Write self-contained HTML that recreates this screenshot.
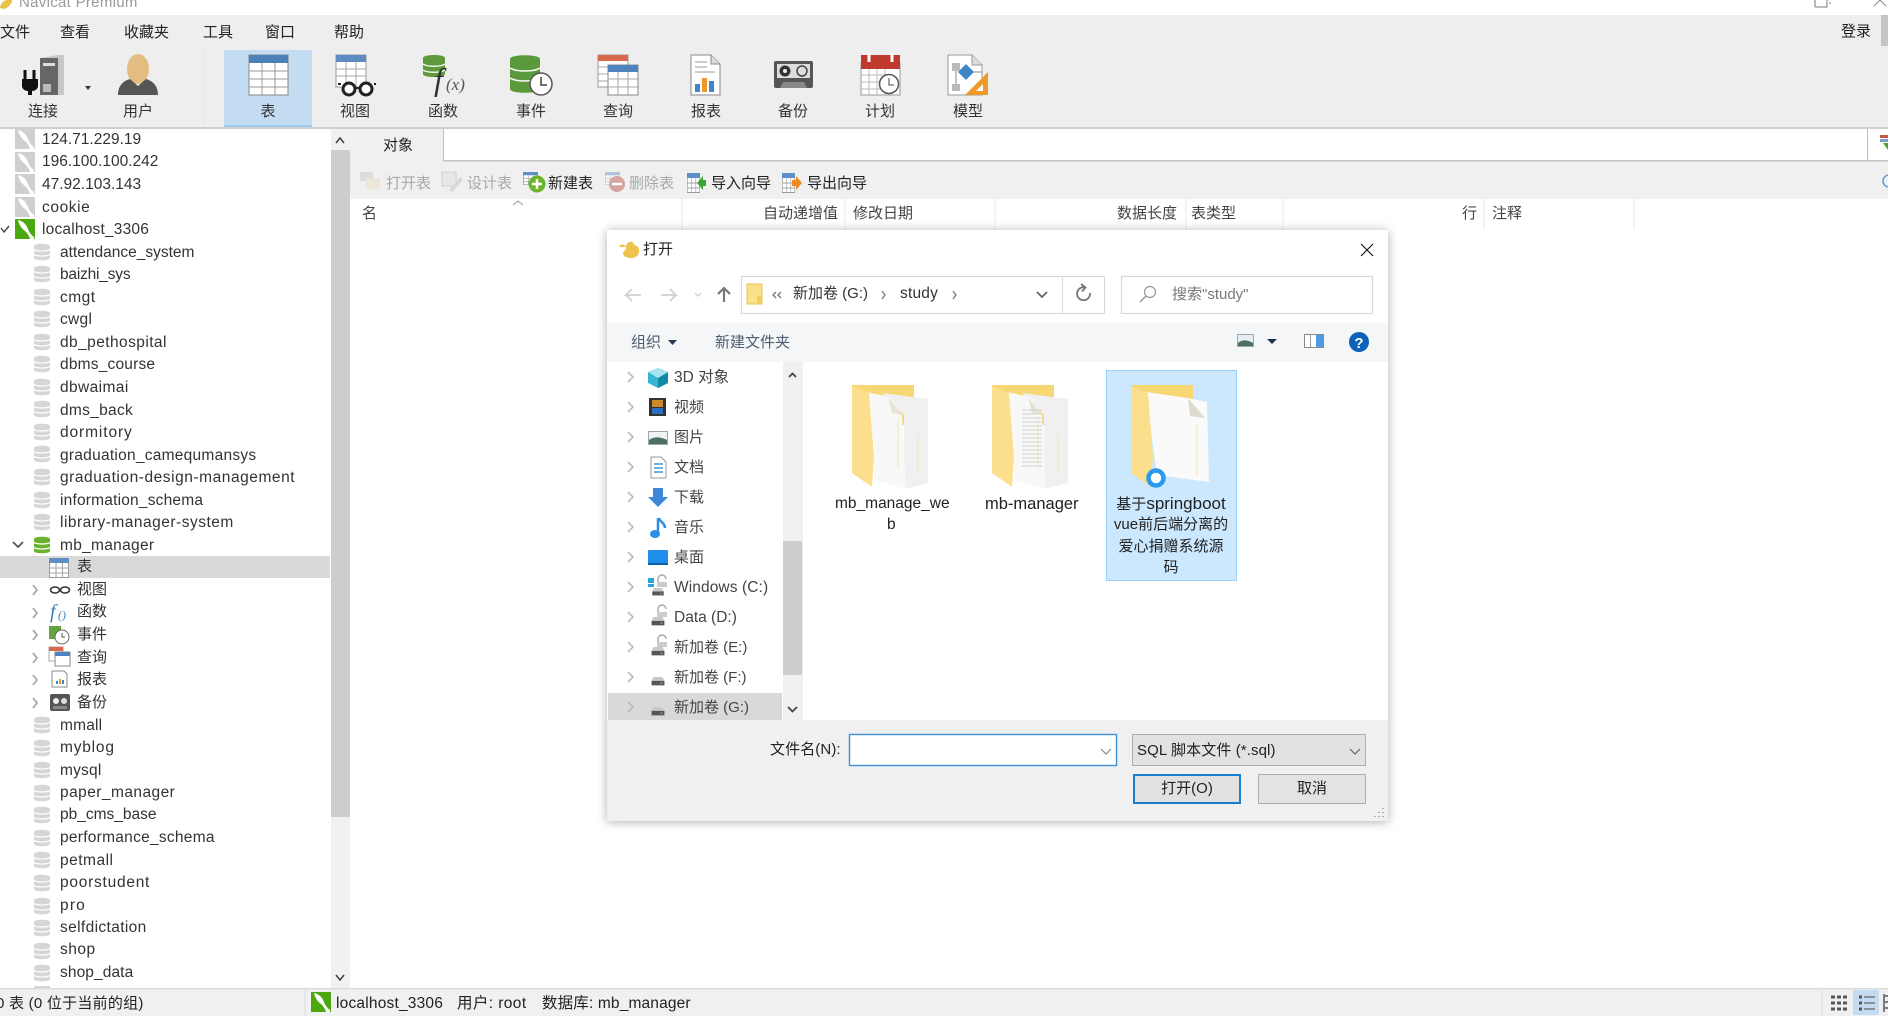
<!DOCTYPE html>
<html lang="zh"><head><meta charset="utf-8"><title>Navicat Premium</title>
<style>
html,body{margin:0;padding:0;width:1888px;height:1016px;overflow:hidden;background:#fff}
#r{position:relative;width:1888px;height:1016px;overflow:hidden;font-family:"Liberation Sans","Noto Sans CJK SC",sans-serif;color:#333;filter:blur(.3px)}
svg.bg{position:absolute;left:0;top:0}
.t{position:absolute;white-space:nowrap;line-height:20px;font-size:15.5px}
.c{font-size:15px}
.k{color:#222}
.m{font-size:15px;color:#222;top:23px}
.l{font-size:15px;color:#333;top:102px;width:60px;text-align:center}
.g{font-size:15px;color:#a9a9a9;top:174px}
.h{font-size:15px;color:#444;top:204px}
.n{font-size:15px;color:#444}
#clip{position:absolute;left:0;top:128px;width:330px;height:860px;overflow:hidden}
#clip .t{margin-top:-128px}
.ct{text-align:center;width:130px;left:1106px;font-size:15px;color:#222}
</style></head><body><div id="r">
<svg class="bg" width="1888" height="1016" viewBox="0 0 1888 1016">
<defs>
<symbol id="db" viewBox="0 0 16 18" width="16" height="18"><path fill="currentColor" d="M0 3C0 0 16 0 16 3v12c0 3-16 3-16 0z"/><path d="M0 6.5c3 2 13 2 16 0M0 11.5c3 2 13 2 16 0" stroke="#fff" fill="none" stroke-width="1.3"/></symbol>
<symbol id="srv" viewBox="0 0 20 20" width="20" height="20"><rect width="20" height="20" fill="currentColor"/><path fill="#fff" d="M3 1c5 1 8 4 10 9 1 3 3 6 6 8v2h-4c-1-4-3-6-5-8C7 10 4 6 3 1z"/></symbol>
<symbol id="fold" viewBox="0 0 78 104" width="78" height="104">
<path fill="#f7d674" d="M0 0h62v40H0z"/>
<path fill="#f0f0f0" d="M30 8l46 6v84l-24 6V30z"/>
<path stroke="#f3e6b8" d="M66 50v36" fill="none"/>
<path fill="#f8f8f8" d="M15 7l23 5 12 18 4 74-32-9V60z"/>
<path stroke="#f3e6b8" d="M46 34v50" fill="none"/>
<path fill="#e6e3d6" d="M36 12l14 18-10-2z"/>
<path fill="#fbdf8c" d="M0 1l17 7 5 64-2 30L0 88z"/>
</symbol>
<symbol id="drv" viewBox="0 0 20 14" width="20" height="14"><path fill="#c9c9c9" d="M3 0h14l3 6H0z"/><rect y="6" width="20" height="7" fill="#555"/><rect x="14" y="8.5" width="3" height="2" fill="#5dd05d"/></symbol>
<symbol id="tbl" viewBox="0 0 20 20" width="20" height="20" preserveAspectRatio="none"><rect x=".5" y=".5" width="19" height="19" fill="#fff" stroke="#9a9a9a"/><rect width="20" height="5" fill="#5f8fc4"/><path d="M0 10h20M0 15h20M7 5v15M13.500 5v15" stroke="#a5a5a5"/></symbol>
<filter id="sh" x="-5%" y="-5%" width="110%" height="110%"><feDropShadow dx="0" dy="1" stdDeviation="5" flood-color="#000" flood-opacity=".32"/></filter>
</defs>

<!-- frame -->
<rect x="0" y="15" width="1888" height="112" fill="#eeeeee"/>
<rect x="0" y="127" width="1888" height="2" fill="#cfcfcf"/>
<rect x="1881" y="15" width="7" height="31" fill="#c6c6c6"/>
<rect x="204" y="52" width="1" height="72" fill="#e4e4e4"/>
<rect x="224" y="50" width="88" height="77" fill="#c3dcf1"/><rect x="224" y="125" width="88" height="2" fill="#98c9ee"/>
<path d="M1815 7V0M1815 7h12V0M1829 3h2" stroke="#777" fill="none"/>
<path d="M1874 6l6-6 6 6" stroke="#888" fill="none"/>
<path d="M0 8c0-3 3-8 7-8h5c0 4-4 8-8 9z" fill="#e8c44a"/>

<!-- tree scrollbar -->
<rect x="331" y="129" width="19" height="860" fill="#f1f1f1"/>
<rect x="331" y="150" width="19" height="667" fill="#cdcdcd"/>
<path d="M336 143l4-5 4 5M336 975l4 5 4-5" stroke="#444" stroke-width="1.600" fill="none"/>
<rect x="0" y="556" width="330" height="22" fill="#d9d9d9"/>

<!-- main -->
<rect x="350" y="129" width="1538" height="70" fill="#f0f0f0"/>
<rect x="443" y="129" width="1424" height="32" fill="#fff"/>
<path d="M443.500 129v32h1424V129" stroke="#bdbdbd" fill="none"/>
<rect x="443" y="160" width="1445" height="1.500" fill="#c2c2c2"/>
<rect x="1868" y="129" width="20" height="31" fill="#fff"/>
<rect x="1880" y="135" width="8" height="3" fill="#c9564a"/><rect x="1880" y="139" width="8" height="3" fill="#7a9cc6"/><path d="M1883 143h5v7z" fill="#4aa52e"/>
<circle cx="1889" cy="181" r="6" fill="none" stroke="#5b9bd5" stroke-width="1.500"/>
<path d="M682 199v31M845 199v31M995 199v31M1186 199v31M1283 199v31M1484 199v31M1634 199v31" stroke="#e9e9e9"/>
<path d="M513 205l5-4 5 4" stroke="#999" fill="none"/>

<!-- obj toolbar icons -->
<g opacity=".45"><rect x="360" y="172" width="13" height="9" fill="#c5c5c5"/><path d="M366 178h14v11h-14z" fill="#e9ddb8"/>
<rect x="442" y="172" width="14" height="14" fill="#ddd" stroke="#aaa"/><path d="M449 190l11-13 3 3-11 12z" fill="#bbb"/></g>
<use href="#tbl" x="523" y="172" width="15" height="13"/><circle cx="537" cy="184" r="8.500" fill="#6ab52d"/><path d="M532 184h10M537 179v10" stroke="#fff" stroke-width="2.500"/>
<use href="#tbl" x="605" y="172" width="15" height="13" opacity=".45"/><circle cx="617" cy="184" r="8" fill="#d6a3a3"/><path d="M612 184h10" stroke="#fff" stroke-width="2.500"/>
<use href="#tbl" x="687" y="173" width="13" height="20"/><path d="M697 183l6-7v4h3v6h-3v4z" fill="#3aa535"/>
<use href="#tbl" x="782" y="173" width="13" height="20"/><path d="M792 180h4v-4l6 7-6 7v-4h-4z" fill="#f08a1d"/>

<!-- top toolbar icons -->
<path d="M40 58l18-3h6v40H40z" fill="#c8c8c8"/><rect x="40" y="58" width="18" height="37" fill="#666"/><rect x="43" y="63" width="12" height="3" fill="#ddd"/><rect x="43" y="84" width="8" height="8" fill="#bbb"/>
<path d="M25 70v9M34 70v9" stroke="#111" stroke-width="3"/><path d="M22 79h16v7c0 3-3 5-6 5v4h-4v-4c-3 0-6-2-6-5z" fill="#111"/>
<path d="M85 86h6l-3 4z" fill="#333"/>
<ellipse cx="138" cy="69" rx="11" ry="15" fill="#e2bd7f"/><path d="M118 95c0-9 5-14 12-16l8 7 8-7c7 2 12 7 12 16z" fill="#555"/>

<rect x="249" y="55" width="39" height="40" fill="#fff" stroke="#888"/><rect x="249" y="55" width="39" height="8" fill="#4d7fb8"/>
<path d="M249 71h39M249 79h39M249 87h39M262 63v32M275 63v32" stroke="#999"/>

<rect x="336" y="55" width="30" height="32" fill="#fff" stroke="#999"/><rect x="336" y="55" width="30" height="7" fill="#5c8cc2"/>
<path d="M336 69h30M336 76h30M346 62v25M356 62v25" stroke="#aaa"/>
<circle cx="349" cy="89" r="6" fill="#fff" stroke="#222" stroke-width="3"/><circle cx="366" cy="89" r="6" fill="#fff" stroke="#222" stroke-width="3"/><path d="M355 88h5M341 84h-3M374 84h2" stroke="#222" stroke-width="2"/>

<path d="M423 58c0-4 22-4 22 0v16c0 4-22 4-22 0z" fill="#5f9a3c"/><path d="M423 64c4 3 18 3 22 0M423 70c4 3 18 3 22 0" stroke="#fff" fill="none" stroke-width="1.300"/>
<text x="434" y="90" font-family="Liberation Serif,serif" font-style="italic" font-size="32" fill="#333">f</text><text x="446" y="90" font-family="Liberation Serif,serif" font-style="italic" font-size="17" fill="#555">(x)</text>

<path d="M510 59c0-5 30-5 30 0v30c0 5-30 5-30 0z" fill="#5b9a3c"/><path d="M510 68c6 4 24 4 30 0M510 78c6 4 24 4 30 0" stroke="#fff" fill="none" stroke-width="1.500"/>
<circle cx="541" cy="84" r="11" fill="#fff" stroke="#555" stroke-width="1.500"/><path d="M541 77v8h6" stroke="#444" fill="none" stroke-width="1.500"/>

<rect x="598" y="55" width="30" height="32" fill="#fff" stroke="#999"/><rect x="598" y="55" width="30" height="6" fill="#d9694e"/><path d="M598 67h10M598 74h10M598 81h10" stroke="#aaa"/>
<rect x="608" y="65" width="30" height="30" fill="#fff" stroke="#888"/><rect x="608" y="65" width="30" height="7" fill="#4d84bd"/><path d="M608 79h30M608 87h30M618 72v23M628 72v23" stroke="#aaa"/>

<path d="M691 55h20l9 9v31h-29z" fill="#fff" stroke="#888"/><path d="M711 55v9h9" fill="#ddd" stroke="#888"/>
<path d="M695 62h12M695 67h12M695 72h20" stroke="#999"/><rect x="695" y="84" width="5" height="8" fill="#3f86c8"/><rect x="702" y="78" width="5" height="14" fill="#ee9a2a"/><rect x="709" y="81" width="5" height="11" fill="#3f86c8"/>

<rect x="774" y="61" width="39" height="27" rx="2" fill="#555"/><rect x="777" y="64" width="33" height="14" fill="#ddd"/><circle cx="785" cy="71" r="5.500" fill="#333"/><circle cx="785" cy="71" r="2" fill="#eee"/><circle cx="802" cy="71" r="5" fill="#ddd" stroke="#444" stroke-width="1.500"/><path d="M780 88l3-6h21l3 6z" fill="#888"/>

<rect x="861" y="63" width="39" height="32" fill="#fff" stroke="#999"/><rect x="861" y="55" width="39" height="14" fill="#c0392f"/><path d="M869 53v9M892 53v9" stroke="#fff" stroke-width="3"/>
<path d="M861 75h28M861 82h28M861 89h28M869 69v26M877 69v26M885 69v26" stroke="#bbb"/><circle cx="889" cy="84" r="9.500" fill="#fff" stroke="#555" stroke-width="1.500"/><path d="M889 78v7h5" stroke="#444" fill="none"/>

<path d="M948 55h24l10 10v30h-34z" fill="#fff" stroke="#999"/><path d="M972 55v10h10" fill="#ddd" stroke="#999"/>
<path d="M958 72l8-8 8 8-8 8z" fill="#3f86c8"/><rect x="952" y="63" width="8" height="8" fill="#bbb"/><rect x="952" y="84" width="8" height="7" fill="#bbb"/><path d="M956 71v13M974 72h8" stroke="#888"/>
<path d="M988 72v23h-23z" fill="#ee9a2a"/><path d="M983 84v7h-7z" fill="#fff"/>

<!-- tree icons -->
<g color="#cfcfcf"><use href="#srv" x="15" y="129"/><use href="#srv" x="15" y="152"/><use href="#srv" x="15" y="174"/><use href="#srv" x="15" y="197"/></g>
<use href="#srv" x="15" y="219" color="#4ba80f"/>
<path d="M1 228l3 4 5-6" stroke="#444" fill="none" stroke-width="1.400"/>
<g color="#d6d6d6">
<use href="#db" x="34" y="243"/><use href="#db" x="34" y="265"/><use href="#db" x="34" y="288"/><use href="#db" x="34" y="310"/><use href="#db" x="34" y="333"/><use href="#db" x="34" y="355"/><use href="#db" x="34" y="378"/><use href="#db" x="34" y="400"/><use href="#db" x="34" y="423"/><use href="#db" x="34" y="445"/><use href="#db" x="34" y="468"/><use href="#db" x="34" y="491"/><use href="#db" x="34" y="513"/>
<use href="#db" x="34" y="716"/><use href="#db" x="34" y="739"/><use href="#db" x="34" y="761"/><use href="#db" x="34" y="784"/><use href="#db" x="34" y="806"/><use href="#db" x="34" y="829"/><use href="#db" x="34" y="851"/><use href="#db" x="34" y="874"/><use href="#db" x="34" y="897"/><use href="#db" x="34" y="919"/><use href="#db" x="34" y="942"/><use href="#db" x="34" y="964"/><rect x="34" y="986" width="16" height="2" fill="#d6d6d6"/>
</g>
<use href="#db" x="34" y="536" color="#6ab22e"/>
<path d="M13 542l5 5 5-5" stroke="#555" fill="none" stroke-width="1.800"/>
<path d="M33 585l4 5-4 5M33 608l4 5-4 5M33 630l4 5-4 5M33 653l4 5-4 5M33 675l4 5-4 5M33 698l4 5-4 5" stroke="#a8a8a8" fill="none" stroke-width="1.800"/>
<use href="#tbl" x="49" y="558"/>
<ellipse cx="55" cy="590" rx="4.500" ry="3" fill="none" stroke="#333" stroke-width="1.500"/><ellipse cx="65" cy="590" rx="4.500" ry="3" fill="none" stroke="#333" stroke-width="1.500"/>
<text x="50" y="618" font-family="Liberation Serif,serif" font-style="italic" font-size="20" fill="#3f7fb5">f</text><text x="58" y="619" font-family="Liberation Serif,serif" font-style="italic" font-size="12" fill="#3f7fb5">()</text>
<rect x="49" y="626" width="12" height="13" fill="#62a33f"/><circle cx="62" cy="637" r="7" fill="#fff" stroke="#666"/><path d="M62 633v4h3" stroke="#555" fill="none"/>
<rect x="49" y="647" width="14" height="14" fill="#fff" stroke="#aaa"/><rect x="49" y="647" width="14" height="4" fill="#d9694e"/><rect x="55" y="652" width="15" height="14" fill="#fff" stroke="#888"/><rect x="55" y="652" width="15" height="4" fill="#4d84bd"/>
<path d="M52 671h12l3 3v13H52z" fill="#fff" stroke="#888"/><rect x="56" y="681" width="2" height="3" fill="#3f86c8"/><rect x="59" y="679" width="2" height="5" fill="#ee9a2a"/><rect x="62" y="680" width="2" height="4" fill="#3f86c8"/>
<rect x="50" y="694" width="20" height="17" rx="2" fill="#555"/><circle cx="56" cy="701" r="3" fill="#eee"/><circle cx="64" cy="701" r="3" fill="#ddd"/><rect x="53" y="706" width="14" height="3" fill="#888"/>

<!-- status bar -->
<rect x="0" y="989" width="1888" height="27" fill="#f0f0f0"/><rect x="0" y="988" width="1888" height="1.500" fill="#dcdcdc"/>
<path d="M305 990v26M1822 990v26" stroke="#ddd"/>
<use href="#srv" x="311" y="992" color="#4ba80f"/>
<path d="M1831 997h4M1837 997h4M1843 997h4M1831 1003h4M1837 1003h4M1843 1003h4M1831 1009h4M1837 1009h4M1843 1009h4" stroke="#555" stroke-width="3"/>
<rect x="1853" y="990" width="26" height="25" fill="#c3dcf1"/>
<path d="M1859 997h3M1859 1003h3M1859 1009h3" stroke="#555" stroke-width="3"/><path d="M1864 997h11M1864 1003h11M1864 1009h11" stroke="#777" stroke-width="1.500"/>
<path d="M1885 996h3M1885 1002h3M1885 1008h3M1884 994v18" stroke="#555" stroke-width="1.500"/>

<!-- dialog -->
<rect x="607" y="230" width="781" height="591" fill="#fff" filter="url(#sh)"/>
<rect x="607" y="720" width="781" height="101" fill="#f0f0f0"/>
<rect x="607" y="323" width="781" height="39" fill="#f5f6f7"/>
<path d="M619 247a3.500 3.500 0 1 1 5 4l-1 2c0 3 3 5 8 5 6 0 9-4 8-9-1-3-3-4-5-4 0-3-3-4-5-3-2 1-3 3-3 5z" fill="#eec24e"/>
<path d="M1361 244l12 12M1373 244l-12 12" stroke="#111" stroke-width="1.100"/>
<rect x="741.500" y="276.500" width="363" height="37" fill="#fff" stroke="#d9d9d9" stroke-width="1.200"/><path d="M1062.500 277v36" stroke="#d9d9d9"/>
<path d="M641 295h-15l6-6M626 295l6 6M661 295h15l-6-6M676 295l-6 6" stroke="#d0d0d0" fill="none" stroke-width="1.800"/>
<path d="M695 293l3 3 3-3" stroke="#d5d5d5" fill="none" stroke-width="1.500"/>
<path d="M724 302v-14M718 294l6-6 6 6" stroke="#777" fill="none" stroke-width="2.200"/>
<path d="M747 284h15v20h-15z" fill="#fbe08a" stroke="#e8c257"/><rect x="757" y="296" width="5" height="8" fill="#f3cd5f"/>
<path d="M776 292l-3 3 3 3M781 292l-3 3 3 3M882 291l3 4-3 4M953 291l3 4-3 4" stroke="#777" fill="none" stroke-width="1.300"/>
<path d="M1037 292l5 5 5-5" stroke="#666" fill="none" stroke-width="1.800"/>
<path d="M1090 293a6.500 6.500 0 1 1-4.500-5.500M1081 284l4.500 3.500-3.500 4" stroke="#777" fill="none" stroke-width="1.800"/>
<rect x="1121.500" y="276.500" width="251" height="37" fill="#fff" stroke="#d9d9d9" stroke-width="1.200"/>
<circle cx="1150" cy="292" r="5.500" fill="none" stroke="#999" stroke-width="1.200"/><path d="M1146 296l-6 6" stroke="#999" stroke-width="1.500"/>
<path d="M668 340h9l-4.500 5z" fill="#2a3a52"/>
<rect x="1237.500" y="334.500" width="16" height="12" fill="#e6eef4" stroke="#9aa5ae"/><path d="M1238 343c4-4 10-3 15 0v3h-15z" fill="#4d6f5f"/>
<path d="M1267 339h10l-5 5z" fill="#1e3050"/>
<rect x="1304.500" y="334.500" width="19" height="13" fill="#fff" stroke="#8a8a8a"/><rect x="1316" y="335" width="7" height="12" fill="#4d9be0"/><path d="M1310.500 335v12" stroke="#9a9a9a"/>
<circle cx="1359" cy="342" r="10" fill="#0b62b8"/>
<text x="1359" y="348" text-anchor="middle" font-family="Liberation Sans,sans-serif" font-weight="bold" font-size="15" fill="#fff">?</text>

<!-- nav -->
<rect x="783" y="362" width="20" height="358" fill="#f0f0f0"/>
<rect x="783" y="541" width="19" height="134" fill="#cdcdcd"/>
<path d="M789 377l3.500-3.500 3.500 3.500M788 707l4.500 4.500 4.500-4.500" stroke="#444" stroke-width="1.800" fill="none"/>
<rect x="608" y="693" width="174" height="27" fill="#d9d9d9"/>
<path d="M628 372l5 5-5 5M628 402l5 5-5 5M628 432l5 5-5 5M628 462l5 5-5 5M628 492l5 5-5 5M628 522l5 5-5 5M628 552l5 5-5 5M628 582l5 5-5 5M628 612l5 5-5 5M628 642l5 5-5 5M628 672l5 5-5 5M628 702l5 5-5 5" stroke="#b5b5b5" fill="none" stroke-width="1.500"/>
<path d="M658 368l10 4v11l-10 5-10-5v-11z" fill="#35b5cf"/><path d="M658 378l10-6v11l-10 5z" fill="#128aa5"/><path d="M648 372l10-4 10 4-10 6z" fill="#a4e5ef"/>
<rect x="649" y="398" width="17" height="18" fill="#333"/><rect x="652" y="400" width="11" height="7" fill="#c98a2e"/><rect x="652" y="408" width="11" height="6" fill="#2c6fc0"/>
<rect x="648.500" y="431.500" width="19" height="13" fill="#eef3f6" stroke="#9aa5ae"/><path d="M649 440c5-4 12-3 18 0v4h-18z" fill="#4d6f5f"/>
<path d="M651 457h10l5 5v16h-15z" fill="#fff" stroke="#999"/><path d="M654 464h9M654 468h9M654 472h9" stroke="#3f9ad6" stroke-width="1.500"/>
<path d="M653 488h10v9h5l-10 10-10-10h5z" fill="#3f87d8"/>
<path d="M658 518v15" stroke="#2d8ee6" stroke-width="2.500"/><ellipse cx="655" cy="534" rx="5" ry="4" fill="#2d8ee6"/><path d="M659 518c1 4 6 5 6 10" stroke="#2d8ee6" fill="none" stroke-width="2.500"/>
<rect x="648" y="550" width="20" height="15" rx="1" fill="#1e8eea"/><rect x="648" y="563" width="20" height="2" fill="#0b5fa8"/>
<rect x="648" y="578" width="6" height="5" fill="#29a3dc"/><rect x="648" y="584" width="6" height="3" fill="#29a3dc"/><path d="M658 582v-3a4 4 0 0 1 8 0" stroke="#aaa" fill="none" stroke-width="1.500"/><rect x="657" y="582" width="10" height="5" fill="#ccc"/><use href="#drv" x="649" y="588" width="18" height="8"/>
<path d="M658 612v-3a4 4 0 0 1 8 0" stroke="#aaa" fill="none" stroke-width="1.500"/><rect x="657" y="612" width="10" height="5" fill="#ccc"/><use href="#drv" x="649" y="617" width="18" height="9"/>
<path d="M658 642v-3a4 4 0 0 1 8 0" stroke="#aaa" fill="none" stroke-width="1.500"/><rect x="657" y="642" width="10" height="5" fill="#ccc"/><use href="#drv" x="649" y="647" width="18" height="9"/>
<use href="#drv" x="649" y="677" width="18" height="9"/>
<use href="#drv" x="649" y="707" width="18" height="9"/>

<!-- items -->
<use href="#fold" x="852" y="385"/>
<use href="#fold" x="992" y="385"/>
<path d="M1022 410h20M1022 414h20M1022 418h20M1022 422h20M1022 426h20M1022 430h20M1022 434h20M1022 438h20M1022 442h20M1022 446h20M1022 450h20M1022 454h20M1022 458h20M1022 462h20M1022 466h20" stroke="#cfcfcf"/>
<rect x="1106.500" y="370.500" width="130" height="210" fill="#cce8ff" stroke="#99d1ff"/>
<path d="M1131 385h62v40h-62z" fill="#f7d674"/>
<path d="M1146 392l42 6 19 4 2 80-52-7-2-15z" fill="#fafafa"/><path d="M1188 398l2 18 15 2z" fill="#dedbd0"/>
<path stroke="#f3e6b8" d="M1197 425v50" fill="none"/>
<path d="M1131 386l17 7 5 64-2 30-20-14z" fill="#fbdf8c"/>
<circle cx="1156" cy="478" r="7.500" fill="#fff" stroke="#2a9af0" stroke-width="4.500"/>

<!-- bottom controls -->
<rect x="849.500" y="734.500" width="267" height="31" fill="#fff" stroke="#3e8fd8" stroke-width="1.400"/>
<path d="M1101 749l5 5 5-5" stroke="#888" fill="none" stroke-width="1.200"/>
<rect x="1132.500" y="734.500" width="233" height="31" fill="#e2e2e2" stroke="#adadad"/>
<path d="M1350 749l5 5 5-5" stroke="#666" fill="none" stroke-width="1.200"/>
<rect x="1134" y="775" width="106" height="28" fill="#e1e1e1" stroke="#1a7fd0" stroke-width="2"/>
<rect x="1258.500" y="774.500" width="107" height="29" fill="#e3e3e3" stroke="#adadad"/>
<path d="M1383 808v1M1383 812v1M1383 816v1M1379 812v1M1379 816v1M1375 816v1" stroke="#aaa" stroke-width="2"/>
</svg>

<div class="t c" style="left:19px;top:-7px;color:#999;letter-spacing:.3px">Navicat Premium</div>
<div class="t m" style="left:0">文件</div><div class="t m" style="left:60px">查看</div><div class="t m" style="left:124px">收藏夹</div><div class="t m" style="left:203px">工具</div><div class="t m" style="left:265px">窗口</div><div class="t m" style="left:334px">帮助</div>
<div class="t m" style="left:1841px;top:22px">登录</div>
<div class="t l" style="left:13px">连接</div><div class="t l" style="left:108px">用户</div><div class="t l" style="left:238px">表</div><div class="t l" style="left:325px">视图</div><div class="t l" style="left:413px">函数</div><div class="t l" style="left:501px">事件</div><div class="t l" style="left:588px">查询</div><div class="t l" style="left:676px">报表</div><div class="t l" style="left:763px">备份</div><div class="t l" style="left:850px">计划</div><div class="t l" style="left:938px">模型</div>

<div id="clip">
<div class="t" style="left:42px;top:130px">124.71.229.19</div>
<div class="t" style="left:42px;top:152px">196.100.100.242</div>
<div class="t" style="left:42px;top:175px">47.92.103.143</div>
<div class="t" style="left:42px;top:198px;letter-spacing:.6px">cookie</div>
<div class="t" style="left:42px;top:220px;letter-spacing:.2px">localhost_3306</div>
<div class="t" style="left:60px;top:243px">attendance_system</div>
<div class="t" style="left:60px;top:265px;letter-spacing:-.2px">baizhi_sys</div>
<div class="t" style="left:60px;top:288px;letter-spacing:.5px">cmgt</div>
<div class="t" style="left:60px;top:310px;letter-spacing:.3px">cwgl</div>
<div class="t" style="left:60px;top:333px;letter-spacing:.43px">db_pethospital</div>
<div class="t" style="left:60px;top:355px;letter-spacing:.2px">dbms_course</div>
<div class="t" style="left:60px;top:378px;letter-spacing:.4px">dbwaimai</div>
<div class="t" style="left:60px;top:401px;letter-spacing:.3px">dms_back</div>
<div class="t" style="left:60px;top:423px;letter-spacing:.9px">dormitory</div>
<div class="t" style="left:60px;top:446px;letter-spacing:.26px">graduation_camequmansys</div>
<div class="t" style="left:60px;top:468px;letter-spacing:.55px">graduation-design-management</div>
<div class="t" style="left:60px;top:491px;letter-spacing:.2px">information_schema</div>
<div class="t" style="left:60px;top:513px;letter-spacing:.5px">library-manager-system</div>
<div class="t" style="left:60px;top:536px;letter-spacing:.3px">mb_manager</div>
<div class="t c" style="left:77px;top:557px">表</div>
<div class="t c" style="left:77px;top:580px">视图</div>
<div class="t c" style="left:77px;top:602px">函数</div>
<div class="t c" style="left:77px;top:625px">事件</div>
<div class="t c" style="left:77px;top:648px">查询</div>
<div class="t c" style="left:77px;top:670px">报表</div>
<div class="t c" style="left:77px;top:693px">备份</div>
<div class="t" style="left:60px;top:716px;letter-spacing:.2px">mmall</div>
<div class="t" style="left:60px;top:738px;letter-spacing:.8px">myblog</div>
<div class="t" style="left:60px;top:761px;letter-spacing:.2px">mysql</div>
<div class="t" style="left:60px;top:783px;letter-spacing:.45px">paper_manager</div>
<div class="t" style="left:60px;top:805px">pb_cms_base</div>
<div class="t" style="left:60px;top:828px;letter-spacing:.27px">performance_schema</div>
<div class="t" style="left:60px;top:851px;letter-spacing:.5px">petmall</div>
<div class="t" style="left:60px;top:873px;letter-spacing:.75px">poorstudent</div>
<div class="t" style="left:60px;top:896px;letter-spacing:1.2px">pro</div>
<div class="t" style="left:60px;top:918px;letter-spacing:.37px">selfdictation</div>
<div class="t" style="left:60px;top:940px;letter-spacing:.5px">shop</div>
<div class="t" style="left:60px;top:963px;letter-spacing:.1px">shop_data</div>
<div class="t" style="left:60px;top:986px">shop_test</div>
</div>

<div class="t c k" style="left:383px;top:136px">对象</div>
<div class="t g" style="left:386px">打开表</div><div class="t g" style="left:467px">设计表</div><div class="t c k" style="left:548px;top:174px">新建表</div><div class="t g" style="left:629px">删除表</div><div class="t c k" style="left:711px;top:174px">导入向导</div><div class="t c k" style="left:807px;top:174px">导出向导</div>
<div class="t h" style="left:362px">名</div><div class="t h" style="left:763px">自动递增值</div><div class="t h" style="left:853px">修改日期</div><div class="t h" style="left:1117px">数据长度</div><div class="t h" style="left:1191px">表类型</div><div class="t h" style="left:1462px">行</div><div class="t h" style="left:1492px">注释</div>

<div class="t c k" style="left:-4px;top:994px;letter-spacing:.25px">0 表 (0 位于当前的组)</div>
<div class="t k" style="left:336px;top:994px;letter-spacing:.2px">localhost_3306</div>
<div class="t k" style="left:457px;top:994px;letter-spacing:.4px">用户: root</div>
<div class="t k" style="left:542px;top:994px;letter-spacing:.15px">数据库: mb_manager</div>

<div class="t c k" style="left:643px;top:240px">打开</div>
<div class="t" style="left:793px;top:284px;color:#333;font-size:15px">新加卷 (G:)</div>
<div class="t" style="left:900px;top:284px;color:#333;letter-spacing:.2px">study</div>
<div class="t" style="left:1172px;top:285px;color:#777;font-size:15px">搜索"study"</div>
<div class="t n" style="left:631px;top:333px;color:#4d5d72">组织</div>
<div class="t n" style="left:715px;top:333px;color:#4d5d72">新建文件夹</div>
<div class="t n" style="left:674px;top:368px;font-size:15.500px">3D 对象</div>
<div class="t n" style="left:674px;top:398px">视频</div>
<div class="t n" style="left:674px;top:428px">图片</div>
<div class="t n" style="left:674px;top:458px">文档</div>
<div class="t n" style="left:674px;top:488px">下载</div>
<div class="t n" style="left:674px;top:518px">音乐</div>
<div class="t n" style="left:674px;top:548px">桌面</div>
<div class="t n" style="left:674px;top:578px;font-size:15.500px;letter-spacing:.1px">Windows (C:)</div>
<div class="t n" style="left:674px;top:608px;font-size:15.500px">Data (D:)</div>
<div class="t n" style="left:674px;top:638px">新加卷 (E:)</div>
<div class="t n" style="left:674px;top:668px">新加卷 (F:)</div>
<div class="t n" style="left:674px;top:698px">新加卷 (G:)</div>
<div class="t" style="left:835px;top:494px;color:#222">mb_manage_we</div>
<div class="t" style="left:887px;top:515px;color:#222">b</div>
<div class="t" style="left:985px;top:494px;color:#222;font-size:16.500px">mb-manager</div>
<div class="t ct" style="top:494px">基于<span style="font-size:17px">springboot</span></div>
<div class="t ct" style="top:515px">vue前后端分离的</div>
<div class="t ct" style="top:537px">爱心捐赠系统源</div>
<div class="t ct" style="top:558px">码</div>
<div class="t c k" style="left:770px;top:740px;letter-spacing:.1px">文件名(N):</div>
<div class="t c k" style="left:1137px;top:741px;letter-spacing:.1px">SQL 脚本文件 (*.sql)</div>
<div class="t c k" style="left:1134px;top:779px;width:106px;text-align:center">打开(O)</div>
<div class="t c k" style="left:1258px;top:779px;width:108px;text-align:center">取消</div>
</div></body></html>
